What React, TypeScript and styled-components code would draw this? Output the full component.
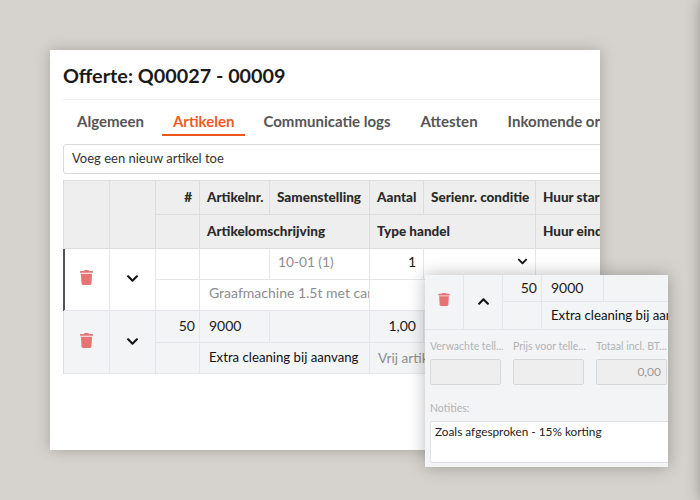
import React from 'react';
import styled, { createGlobalStyle } from 'styled-components';
import { FaTrash, FaChevronDown, FaChevronUp } from 'react-icons/fa';

const GlobalStyle = createGlobalStyle`
  html, body {
    margin: 0;
    height: 100%;
    background: #d6d3ce;
    overflow: hidden;
  }
  body {
    font-family: Lato, 'Noto Sans', sans-serif;
    color: #1c1c1c;
  }
`;

const Page = styled.div`
  position: relative;
  width: 700px;
  height: 500px;
  overflow: hidden;
  padding: 50px 0 0 50px;
  box-sizing: border-box;
`;

const NextCard = styled.div`
  position: absolute;
  top: 0;
  left: 700px;
  width: 100px;
  height: 500px;
  background: #fff;
  box-shadow: 0 0 14px rgba(0, 0, 0, 0.3);
`;

const Card = styled.div`
  width: 550px;
  height: 400px;
  box-sizing: border-box;
  background: #fff;
  padding: 0 0 0 13px;
  overflow: hidden;
  box-shadow: 0 0 14px rgba(0, 0, 0, 0.22);
`;

const Title = styled.h1`
  margin: 0;
  height: 50px;
  box-sizing: border-box;
  padding-top: 11px;
  font-size: 19.8px;
  line-height: 28px;
  font-weight: 700;
  color: #1a1a1a;
  border-bottom: 1px solid #eeeeee;
  white-space: nowrap;
`;

const Tabs = styled.div`
  display: flex;
  height: 36px;
  margin-left: -1px;
  white-space: nowrap;
`;

const Tab = styled.div<{ $active?: boolean }>`
  height: 34px;
  line-height: 43px;
  padding: 0 ${(p) => (p.$active ? 11 : 15)}px;
  margin: 0 ${(p) => (p.$active ? 3 : 0)}px;
  font-size: 15px;
  font-weight: 700;
  color: ${(p) => (p.$active ? '#ee5a24' : '#555555')};
  border-bottom: 2px solid ${(p) => (p.$active ? '#f0531c' : 'transparent')};
`;

const AddInput = styled.div`
  margin-top: 8px;
  width: 560px;
  height: 30px;
  box-sizing: border-box;
  border: 1px solid #d9d9d9;
  border-radius: 3px;
  padding: 0 8px;
  font-size: 13px;
  line-height: 27px;
  color: #333;
`;

const Table = styled.div`
  margin-top: 6px;
  display: grid;
  grid-template-columns: 46px 46px 44px 70px 100px 54px 112px 120px;
  grid-template-rows: 34px 34px 31px 31px 32px 31px;
  width: 602px;
  border-top: 1px solid #dddddd;
  border-left: 1px solid #dddddd;
`;

const Cell = styled.div<{
  $col?: number;
  $rows?: number;
  $right?: boolean;
  $tone?: 'head' | 'body' | 'alt';
  $muted?: boolean;
  $center?: boolean;
  $raised?: boolean;
}>`
  grid-column: span ${(p) => p.$col ?? 1};
  grid-row: span ${(p) => p.$rows ?? 1};
  box-sizing: border-box;
  min-width: 0;
  overflow: hidden;
  white-space: nowrap;
  display: flex;
  align-items: center;
  justify-content: ${(p) => (p.$center ? 'center' : p.$right ? 'flex-end' : 'flex-start')};
  padding: 0 ${(p) => (p.$center ? 0 : 7)}px ${(p) => (p.$raised ? 5 : 2)}px ${(p) => (p.$center ? 0 : 9)}px;
  font-size: 14px;
  background: ${(p) => (p.$tone === 'head' ? '#eeeeee' : p.$tone === 'alt' ? '#f3f4f6' : '#ffffff')};
  border-right: 1px solid ${(p) => (p.$tone === 'head' ? '#dcdcdc' : '#e4e6ea')};
  border-bottom: 1px solid ${(p) => (p.$tone === 'head' ? '#dcdcdc' : '#e4e6ea')};
  color: ${(p) => (p.$muted ? '#8d8d8d' : '#1a1a1a')};
`;

const HeadCell = styled(Cell).attrs({ $tone: 'head' as const })`
  padding-left: 7px;
  font-weight: 900;
  font-size: 13.5px;
  color: #2a2a2a;
`;

const IndexCell = styled(Cell)`
  padding-right: 4px;
`;

const DescCell = styled(Cell)`
  font-size: 13.2px;
  color: #111;
`;

const MutedDesc = styled(Cell).attrs({ $muted: true })`
  font-size: 13.7px;
  padding-left: 8px;
`;

const MarkedCell = styled(Cell)`
  box-shadow: -1px 0 0 #555555, inset 1px 0 0 #555555;
`;

const Trash = styled(FaTrash)<{ $small?: boolean }>`
  width: ${(p) => (p.$small ? 12 : 13)}px;
  height: ${(p) => (p.$small ? 13 : 15)}px;
  color: #e87373;
  margin-top: ${(p) => (p.$small ? -4 : -2)}px;
`;

const Chevron = styled.span`
  display: flex;
  color: #111;
  font-size: 13px;
`;

const Popup = styled.div`
  position: absolute;
  left: 425px;
  top: 275px;
  width: 243px;
  height: 192px;
  background: #f3f4f6;
  overflow: hidden;
  box-shadow: 0 0 16px rgba(0, 0, 0, 0.28);
`;

const PopupTable = styled.div`
  display: grid;
  grid-template-columns: 39px 39px 39px 62px 100px;
  grid-template-rows: 27px 28px;
  width: 300px;
`;

const Fields = styled.div`
  display: grid;
  grid-template-columns: repeat(3, 71px);
  column-gap: 12px;
  padding: 9px 0 0 5px;
`;

const Field = styled.div`
  min-width: 0;
`;

const FieldLabel = styled.div`
  font-size: 10.5px;
  line-height: 14px;
  color: #b3b3b3;
  white-space: nowrap;
  margin-bottom: 6px;
`;

const FieldBox = styled.div`
  height: 26px;
  box-sizing: border-box;
  background: #eeeeee;
  border: 1px solid #d8d8d8;
  border-radius: 2px;
  font-size: 12px;
  line-height: 24px;
  text-align: right;
  padding-right: 5px;
  color: #9a9a9a;
`;

const NotesLabel = styled(FieldLabel)`
  margin: 16px 0 6px 5px;
`;

const Notes = styled.div`
  margin-left: 5px;
  width: 260px;
  height: 42px;
  box-sizing: border-box;
  background: #fff;
  border: 1px solid #dfe1e5;
  border-radius: 2px;
  padding: 2px 4px;
  font-size: 11.8px;
  line-height: 16px;
  color: #222;
  white-space: nowrap;
`;

const App: React.FC = () => (
  <Page>
    <GlobalStyle />
    <NextCard />
    <Card>
      <Title>Offerte: Q00027 - 00009</Title>
      <Tabs>
        <Tab>Algemeen</Tab>
        <Tab $active>Artikelen</Tab>
        <Tab>Communicatie logs</Tab>
        <Tab>Attesten</Tab>
        <Tab>Inkomende orders</Tab>
      </Tabs>
      <AddInput>Voeg een nieuw artikel toe</AddInput>
      <Table>
        <HeadCell $rows={2} />
        <HeadCell $rows={2} />
        <HeadCell $right>#</HeadCell>
        <HeadCell>Artikelnr.</HeadCell>
        <HeadCell>Samenstelling</HeadCell>
        <HeadCell>Aantal</HeadCell>
        <HeadCell>Serienr. conditie</HeadCell>
        <HeadCell>Huur start</HeadCell>
        <HeadCell />
        <HeadCell $col={2}>Artikelomschrijving</HeadCell>
        <HeadCell $col={2}>Type handel</HeadCell>
        <HeadCell>Huur einde</HeadCell>

        <MarkedCell $rows={2} $center><Trash /></MarkedCell>
        <Cell $rows={2} $center><Chevron><FaChevronDown /></Chevron></Cell>
        <Cell />
        <Cell />
        <MutedDesc $raised>10-01 (1)</MutedDesc>
        <Cell $right $raised>1</Cell>
        <Cell $right $raised><Chevron><FaChevronDown size={11} /></Chevron></Cell>
        <Cell />
        <Cell />
        <Cell $col={2} $muted $raised>Graafmachine 1.5t met cand</Cell>
        <Cell $col={2} />
        <Cell />

        <Cell $tone="alt" $rows={2} $center><Trash /></Cell>
        <Cell $tone="alt" $rows={2} $center><Chevron><FaChevronDown /></Chevron></Cell>
        <IndexCell $tone="alt" $right>50</IndexCell>
        <Cell $tone="alt">9000</Cell>
        <Cell $tone="alt" />
        <Cell $tone="alt" $right>1,00</Cell>
        <Cell $tone="alt" />
        <Cell $tone="alt" />
        <Cell $tone="alt" />
        <DescCell $tone="alt" $col={2}>Extra cleaning bij aanvang</DescCell>
        <MutedDesc $tone="alt" $col={2}>Vrij artikel</MutedDesc>
        <Cell $tone="alt" />
      </Table>
    </Card>
    <Popup>
      <PopupTable>
        <Cell $tone="alt" $rows={2} $center><Trash $small /></Cell>
        <Cell $tone="alt" $rows={2} $center><Chevron><FaChevronUp /></Chevron></Cell>
        <IndexCell $tone="alt" $right>50</IndexCell>
        <Cell $tone="alt">9000</Cell>
        <Cell $tone="alt" />
        <Cell $tone="alt" />
        <DescCell $tone="alt" $col={2}>Extra cleaning bij aanvang</DescCell>
      </PopupTable>
      <Fields>
        <Field>
          <FieldLabel>Verwachte tell...</FieldLabel>
          <FieldBox />
        </Field>
        <Field>
          <FieldLabel>Prijs voor telle...</FieldLabel>
          <FieldBox />
        </Field>
        <Field>
          <FieldLabel>Totaal incl. BT...</FieldLabel>
          <FieldBox>0,00</FieldBox>
        </Field>
      </Fields>
      <NotesLabel>Notities:</NotesLabel>
      <Notes>Zoals afgesproken - 15% korting</Notes>
    </Popup>
  </Page>
);

export default App;
